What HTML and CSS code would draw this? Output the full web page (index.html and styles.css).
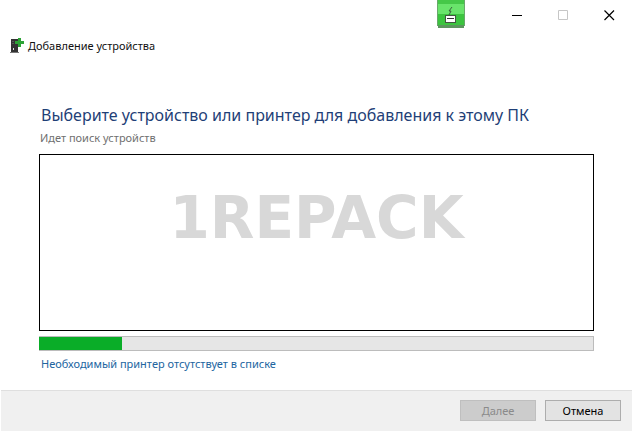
FILE: index.html
```html
<!DOCTYPE html>
<html lang="ru">
<head>
    <meta charset="UTF-8">
    <meta name="viewport" content="width=device-width, initial-scale=1.0">
    <title>Добавление устройства</title>
    <link rel="stylesheet" href="styles.css">
</head>
<body>
    <div class="window">
        <div class="titlebar">
            <svg class="badge" width="28" height="28" viewBox="0 0 28 28" shape-rendering="crispEdges" aria-hidden="true">
                <rect x="0" y="0" width="28" height="26" fill="#68a86a"/>
                <rect x="1" y="25" width="26" height="3" fill="#5b955d"/>
                <rect x="1" y="0" width="26" height="4" fill="#45c848"/>
                <rect x="1" y="4" width="26" height="10" fill="#69e46b"/>
                <rect x="1" y="14" width="26" height="11" fill="#3cc43f"/>
                <path d="M15 7l-3 4h2l-2 4" fill="none" stroke="#3b5f3d" shape-rendering="auto"/>
                <path d="M8 15h11v8H8z" fill="#41583f"/>
                <path d="M9 16h9v6H9z" fill="#fff"/>
                <path d="M10 18h7v1h-7z" fill="#333"/>
            </svg>
            <button class="caption-button" aria-label="Свернуть">
                <svg width="11" height="11" viewBox="0 0 11 11"><path d="M0 5.500h10" stroke="#000"/></svg>
            </button>
            <button class="caption-button" aria-label="Развернуть" disabled>
                <svg width="11" height="11" viewBox="0 0 11 11"><path d="M.5.500h9v9h-9z" fill="none" stroke="#c6c6c6"/></svg>
            </button>
            <button class="caption-button" aria-label="Закрыть">
                <svg width="11" height="11" viewBox="0 0 11 11"><path d="M.5.500l9.500 9.500M10 .500L.5 10" stroke="#000" stroke-width="1.200"/></svg>
            </button>
        </div>

        <div class="header">
            <svg width="15" height="17" viewBox="0 0 15 17" shape-rendering="crispEdges" aria-hidden="true">
                <path d="M2 2h7v13H2z" fill="#333"/>
                <path d="M1 15h9v1H1z" fill="#777"/>
                <path d="M3 4h2v1H3zM3 6h2v1H3z" fill="#555"/>
                <path d="M4 11h1v2H4z" fill="#ddd"/>
                <path d="M9 1h3v3h3v3h-3v3H9V7H6V4h3z" fill="#2da336"/>
            </svg>
            <span>Добавление устройства</span>
        </div>

        <main class="content">
            <h1 class="title">Выберите устройство или принтер для добавления к этому ПК</h1>
            <p class="status">Идет поиск устройств</p>
            <div class="device-list">
                <span class="watermark">1REPACK</span>
            </div>
            <div class="progress" role="progressbar" aria-label="Идет поиск устройств">
                <div class="progress-bar" style="width: 15%"></div>
            </div>
            <a class="link" href="#">Необходимый принтер отсутствует в списке</a>
        </main>

        <div class="footer">
            <button class="button" disabled>Далее</button>
            <button class="button">Отмена</button>
        </div>
    </div>
</body>
</html>
```
FILE: styles.css
```css
* {
    box-sizing: border-box;
}
body {
    margin: 0;
    background-color: #fff;
    font-family: "Noto Sans", "Open Sans", sans-serif;
    font-size: 11px;
    line-height: 16px;
    color: #111;
}
.window {
    display: flex;
    flex-direction: column;
    min-height: 100vh;
    padding: 0 1px 1px;
}
.titlebar {
    display: flex;
    justify-content: flex-end;
    height: 30px;
}
.badge {
    margin-right: 29px;
}
.caption-button {
    display: flex;
    justify-content: center;
    align-items: center;
    width: 46px;
    padding: 0;
    border: none;
    background: none;
}
.header {
    display: flex;
    align-items: center;
    gap: 4px;
    padding: 7px 8px;
}
.content {
    flex: 1;
    display: flex;
    flex-direction: column;
    padding: 42px 38px 0;
}
.title {
    margin: 0;
    padding-left: 2px;
    font-size: 16px;
    font-weight: 400;
    line-height: 24px;
    color: #1f3f77;
}
.status {
    margin: 3px 0 8px;
    padding-left: 1px;
    color: #707070;
}
.device-list {
    flex: 1;
    display: flex;
    justify-content: center;
    align-items: center;
    border: 1px solid #000;
    padding-bottom: 50px;
}
.watermark {
    font-family: "DejaVu Sans", sans-serif;
    font-size: 58px;
    font-weight: 700;
    line-height: 64px;
    color: #d8d8d8;
}
.progress {
    height: 15px;
    margin-top: 5px;
    border: 1px solid #bcbcbc;
    border-left: none;
    background-color: #e6e6e6;
}
.progress-bar {
    height: 100%;
    background-color: #0aad28;
}
.link {
    align-self: flex-start;
    margin: 5px 0 18px;
    padding-left: 2px;
    color: #22659f;
    text-decoration: none;
}
.footer {
    display: flex;
    justify-content: flex-end;
    gap: 9px;
    padding: 9px 11px 10px;
    border-top: 1px solid #dfdfdf;
    background-color: #f0f0f0;
}
.button {
    width: 76px;
    height: 21px;
    padding: 0;
    border: 1px solid #adadad;
    background-color: #e3e3e3;
    font-family: inherit;
    font-size: 11px;
    line-height: 18px;
    color: #000;
}
.button:disabled {
    border-color: #bfbfbf;
    background-color: #ccc;
    color: #8a8a8a;
}
```
